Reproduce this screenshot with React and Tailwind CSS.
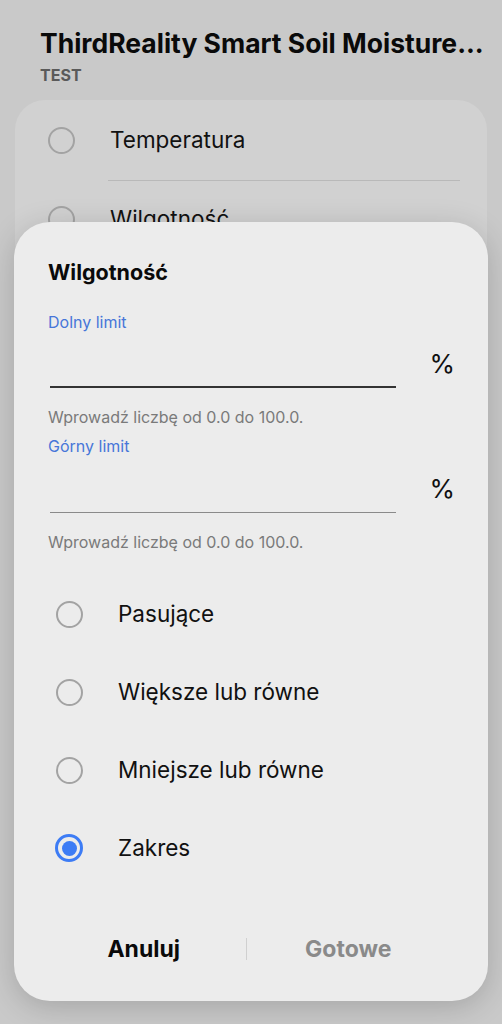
import React from "react";

function Radio({ checked, className = "" }) {
  if (checked) {
    return (
      <div className={"w-[28px] h-[28px] rounded-full border-[3px] border-[#3d7cf5] flex items-center justify-center shrink-0 " + className}>
        <div className="w-[15px] h-[15px] rounded-full bg-[#3d7cf5]" />
      </div>
    );
  }
  return <div className={"w-[27px] h-[27px] rounded-full border-2 border-[#a3a3a3] shrink-0 " + className} />;
}

function Field({ label, focused }) {
  return (
    <div className="flex flex-col">
      <div className="text-[16px] leading-[20px] text-[#4776d9]">{label}</div>
      <div className="flex items-end">
        <div
          className={
            "flex-1 ml-[2px] " +
            (focused ? "h-[56px] border-b-2 border-[#333333]" : "h-[57px] border-b border-[#8a8a8a]")
          }
        />
        <div className="w-[60px] h-[56px] flex items-center justify-end pr-[1px] pt-[6px] text-[26px] text-[#111]">%</div>
      </div>
      <div className="mt-[19px] text-[16px] leading-[20px] text-[#7a7a7a]">Wprowadź liczbę od 0.0 do 100.0.</div>
    </div>
  );
}

export default function App() {
  const options = [
    { label: "Pasujące", checked: false },
    { label: "Większe lub równe", checked: false },
    { label: "Mniejsze lub równe", checked: false },
    { label: "Zakres", checked: true },
  ];
  return (
    <div
      className="relative w-[502px] h-[1024px] overflow-hidden bg-[#c9c9c9]"
      style={{ fontFamily: "Inter, 'Noto Sans', sans-serif" }}
    >
      <div className="pl-[40px] pt-[27px]">
        <div className="text-[26.5px] leading-[32px] font-bold text-[#0a0a0a] whitespace-nowrap">
          ThirdReality Smart Soil Moisture...
        </div>
        <div className="mt-[6px] text-[16px] leading-[20px] font-bold text-[#5a5a5a]">TEST</div>
      </div>
      <div className="mx-[15px] mt-[15px] rounded-[30px] bg-[#d1d1d1] h-[300px]">
        <div className="flex items-center h-[80px] pl-[33px]">
          <Radio />
          <div className="ml-[35px] text-[22.5px] text-[#111]">Temperatura</div>
        </div>
        <div className="ml-[93px] mr-[27px] h-px bg-[#b9b9b9]" />
        <div className="flex items-center h-[76px] pl-[33px]">
          <Radio />
          <div className="ml-[35px] text-[22.5px] text-[#111]">Wilgotność</div>
        </div>
      </div>

      <div className="absolute left-[14px] top-[222px] w-[474px] h-[779px] rounded-[36px] bg-[#ececec] shadow-[0_6px_30px_rgba(0,0,0,0.18)] flex flex-col">
        <div className="pl-[34px] pr-[32px] pt-[36px]">
          <div className="text-[21.5px] leading-[28px] font-bold text-[#0a0a0a]">Wilgotność</div>
          <div className="mt-[26px] flex flex-col gap-[9px]">
            <Field label="Dolny limit" focused />
            <Field label="Górny limit" />
          </div>
        </div>
        <div className="mt-[23px] flex flex-col">
          {options.map((o) => (
            <div key={o.label} className="flex items-center h-[78px] pl-[42px]">
              <Radio checked={o.checked} className={o.checked ? "-ml-[1px]" : ""} />
              <div className="ml-[35px] text-[22.5px] text-[#111]">{o.label}</div>
            </div>
          ))}
        </div>
        <div className="mt-auto mb-[22px] ml-[28px] mr-[38px] h-[60px] flex items-center">
          <div className="flex-1 text-center text-[23px] font-bold text-[#0a0a0a]">Anuluj</div>
          <div className="w-px h-[22px] bg-[#d0d0d0]" />
          <div className="flex-1 text-center text-[23px] font-bold text-[#8a8a8a]">Gotowe</div>
        </div>
      </div>
    </div>
  );
}
